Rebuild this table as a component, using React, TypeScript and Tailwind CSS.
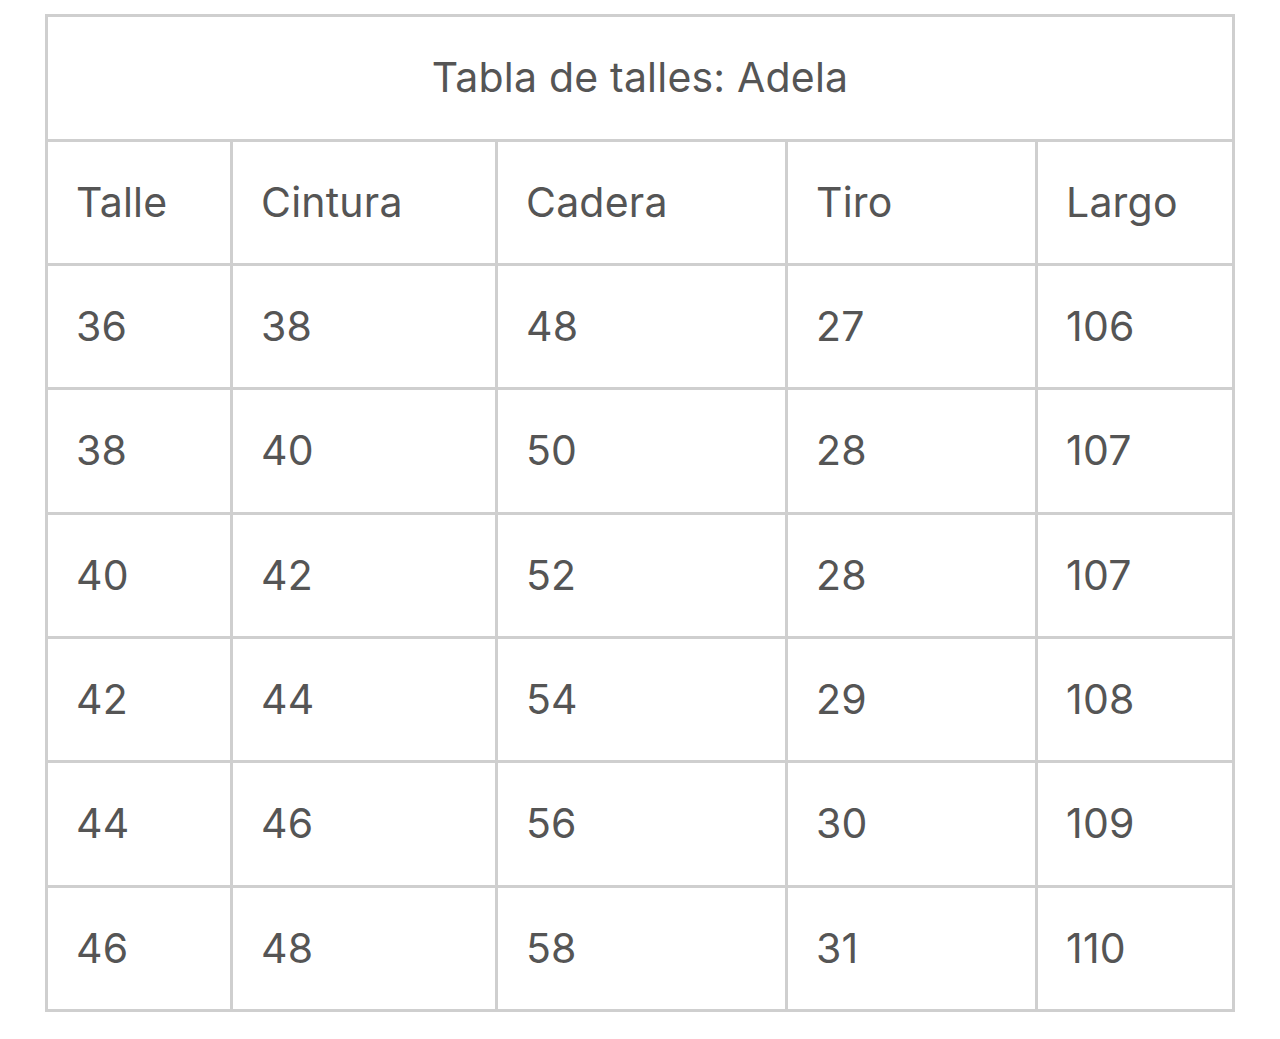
import React from 'react';

const headers = ['Talle', 'Cintura', 'Cadera', 'Tiro', 'Largo'];

const rows: string[][] = [
  ['36', '38', '48', '27', '106'],
  ['38', '40', '50', '28', '107'],
  ['40', '42', '52', '28', '107'],
  ['42', '44', '54', '29', '108'],
  ['44', '46', '56', '30', '109'],
  ['46', '48', '58', '31', '110'],
];

const Cell: React.FC<{ children: React.ReactNode }> = ({ children }) => (
  <div className="bg-white flex items-center pl-[28px] text-[41px] tracking-[0.2px] text-[#555555]">
    {children}
  </div>
);

export default function App() {
  return (
    <div className="min-h-[1039px] w-[1280px] bg-white pt-[14px] pl-[45px] font-['Inter',sans-serif]">
      <div className="w-[1190px] bg-[#cfcfcf] p-[3px] grid grid-cols-[182px_262px_287px_247px_194px] grid-rows-[122px_121px_121px_122px_121px_121px_122px_121px] gap-[3px]">
        <div className="col-span-5 bg-white flex items-center justify-center text-[41px] tracking-[0.2px] text-[#555555]">
          Tabla de talles: Adela
        </div>
        {headers.map((h) => (
          <Cell key={h}>{h}</Cell>
        ))}
        {rows.map((r, i) =>
          r.map((v, j) => <Cell key={`${i}-${j}`}>{v}</Cell>)
        )}
      </div>
    </div>
  );
}
